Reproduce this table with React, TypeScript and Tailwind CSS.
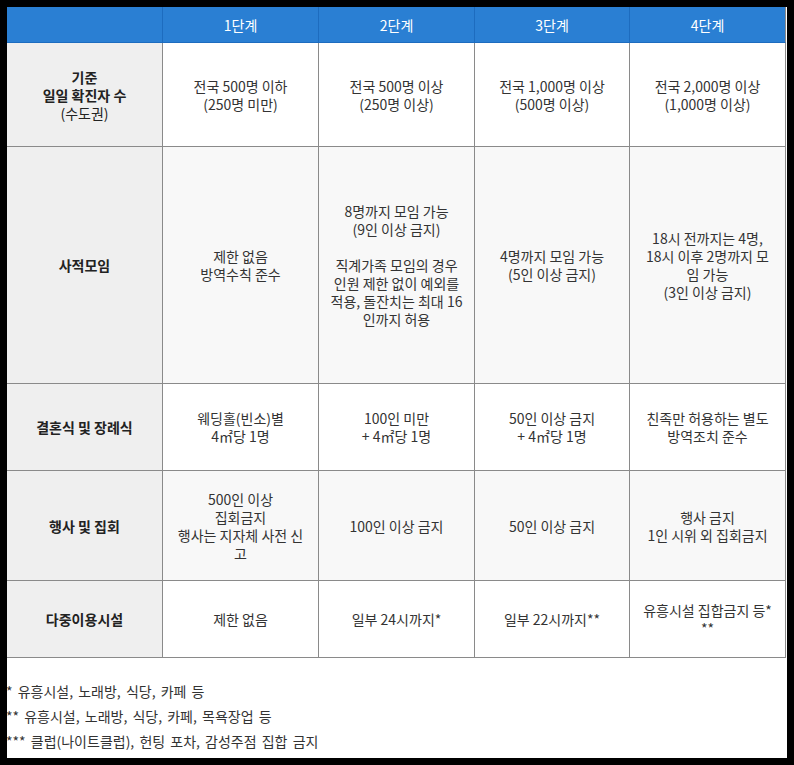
const font = { fontFamily: '"Noto Sans CJK KR", "Noto Sans", sans-serif' };

const headers = ["", "1단계", "2단계", "3단계", "4단계"];

type Row = { label: string[]; cells: string[][]; height: string; striped: boolean };

const rows: Row[] = [
  {
    label: ["기준", "일일 확진자 수", "(수도권)"],
    cells: [
      ["전국 500명 이하", "(250명 미만)"],
      ["전국 500명 이상", "(250명 이상)"],
      ["전국 1,000명 이상", "(500명 이상)"],
      ["전국 2,000명 이상", "(1,000명 이상)"],
    ],
    height: "h-[104px]",
    striped: false,
  },
  {
    label: ["사적모임"],
    cells: [
      ["제한 없음", "방역수칙 준수"],
      ["8명까지 모임 가능", "(9인 이상 금지)", "", "직계가족 모임의 경우", "인원 제한 없이 예외를", "적용, 돌잔치는 최대 16", "인까지 허용"],
      ["4명까지 모임 가능", "(5인 이상 금지)"],
      ["18시 전까지는 4명,", "18시 이후 2명까지 모", "임 가능", "(3인 이상 금지)"],
    ],
    height: "h-[237px]",
    striped: true,
  },
  {
    label: ["결혼식 및 장례식"],
    cells: [
      ["웨딩홀(빈소)별", "4㎡당 1명"],
      ["100인 미만", "+ 4㎡당 1명"],
      ["50인 이상 금지", "+ 4㎡당 1명"],
      ["친족만 허용하는 별도", "방역조치 준수"],
    ],
    height: "h-[87px]",
    striped: false,
  },
  {
    label: ["행사 및 집회"],
    cells: [
      ["500인 이상", "집회금지", "행사는 지자체 사전 신", "고"],
      ["100인 이상 금지"],
      ["50인 이상 금지"],
      ["행사 금지", "1인 시위 외 집회금지"],
    ],
    height: "h-[110px]",
    striped: true,
  },
  {
    label: ["다중이용시설"],
    cells: [
      ["제한 없음"],
      ["일부 24시까지*"],
      ["일부 22시까지**"],
      ["유흥시설 집합금지 등*", "**"],
    ],
    height: "h-[77px]",
    striped: false,
  },
];

const notes = [
  "* 유흥시설, 노래방, 식당, 카페 등",
  "** 유흥시설, 노래방, 식당, 카페, 목욕장업 등",
  "*** 클럽(나이트클럽), 헌팅 포차, 감성주점 집합 금지",
];

function Lines({ lines }: { lines: string[] }) {
  return (
    <div>
      {lines.map((l, i) => (
        <div key={i} className="whitespace-nowrap h-[18px]">
          {l}
        </div>
      ))}
    </div>
  );
}

export default function App() {
  return (
    <div className="bg-black p-[7px] w-[794px] h-[765px]" style={font}>
      <div className="bg-white h-[751px] overflow-hidden text-[14px] leading-[18px] text-[#333]">
        <div className="grid grid-cols-[156px_156px_156px_155px_156px]">
          {headers.map((h, i) => (
            <div
              key={i}
              className={`h-[36px] flex items-center justify-center bg-[#2a7fd3] text-white border-b ${
                i === 4 ? "border-r border-[#8a8a8a]" : "border-r border-[#1d6cbf]"
              } border-b-[#1d6cbf]`}
            >
              {h}
            </div>
          ))}
          {rows.map((r, ri) => (
            <>
              <div
                key={`l${ri}`}
                className={`${r.height} flex items-center justify-center text-center bg-[#efefef] border-r border-b border-[#8a8a8a] text-[#222]`}
              >
                <div>
                  {r.label.map((l, i) => (
                    <div key={i} className={l.startsWith("(") ? "font-normal" : "font-bold"}>
                      {l}
                    </div>
                  ))}
                </div>
              </div>
              {r.cells.map((c, ci) => (
                <div
                  key={`c${ri}-${ci}`}
                  className={`${r.height} flex items-center justify-center text-center px-2 border-r border-b border-[#8a8a8a] ${
                    r.striped ? "bg-[#f8f8f8]" : "bg-white"
                  }`}
                >
                  <Lines lines={c} />
                </div>
              ))}
            </>
          ))}
        </div>
        <div className="mt-[21px] -ml-[1px] [word-spacing:2px]">
          {notes.map((n) => (
            <div key={n} className="h-[25px] leading-[25px]">
              {n}
            </div>
          ))}
        </div>
      </div>
    </div>
  );
}
